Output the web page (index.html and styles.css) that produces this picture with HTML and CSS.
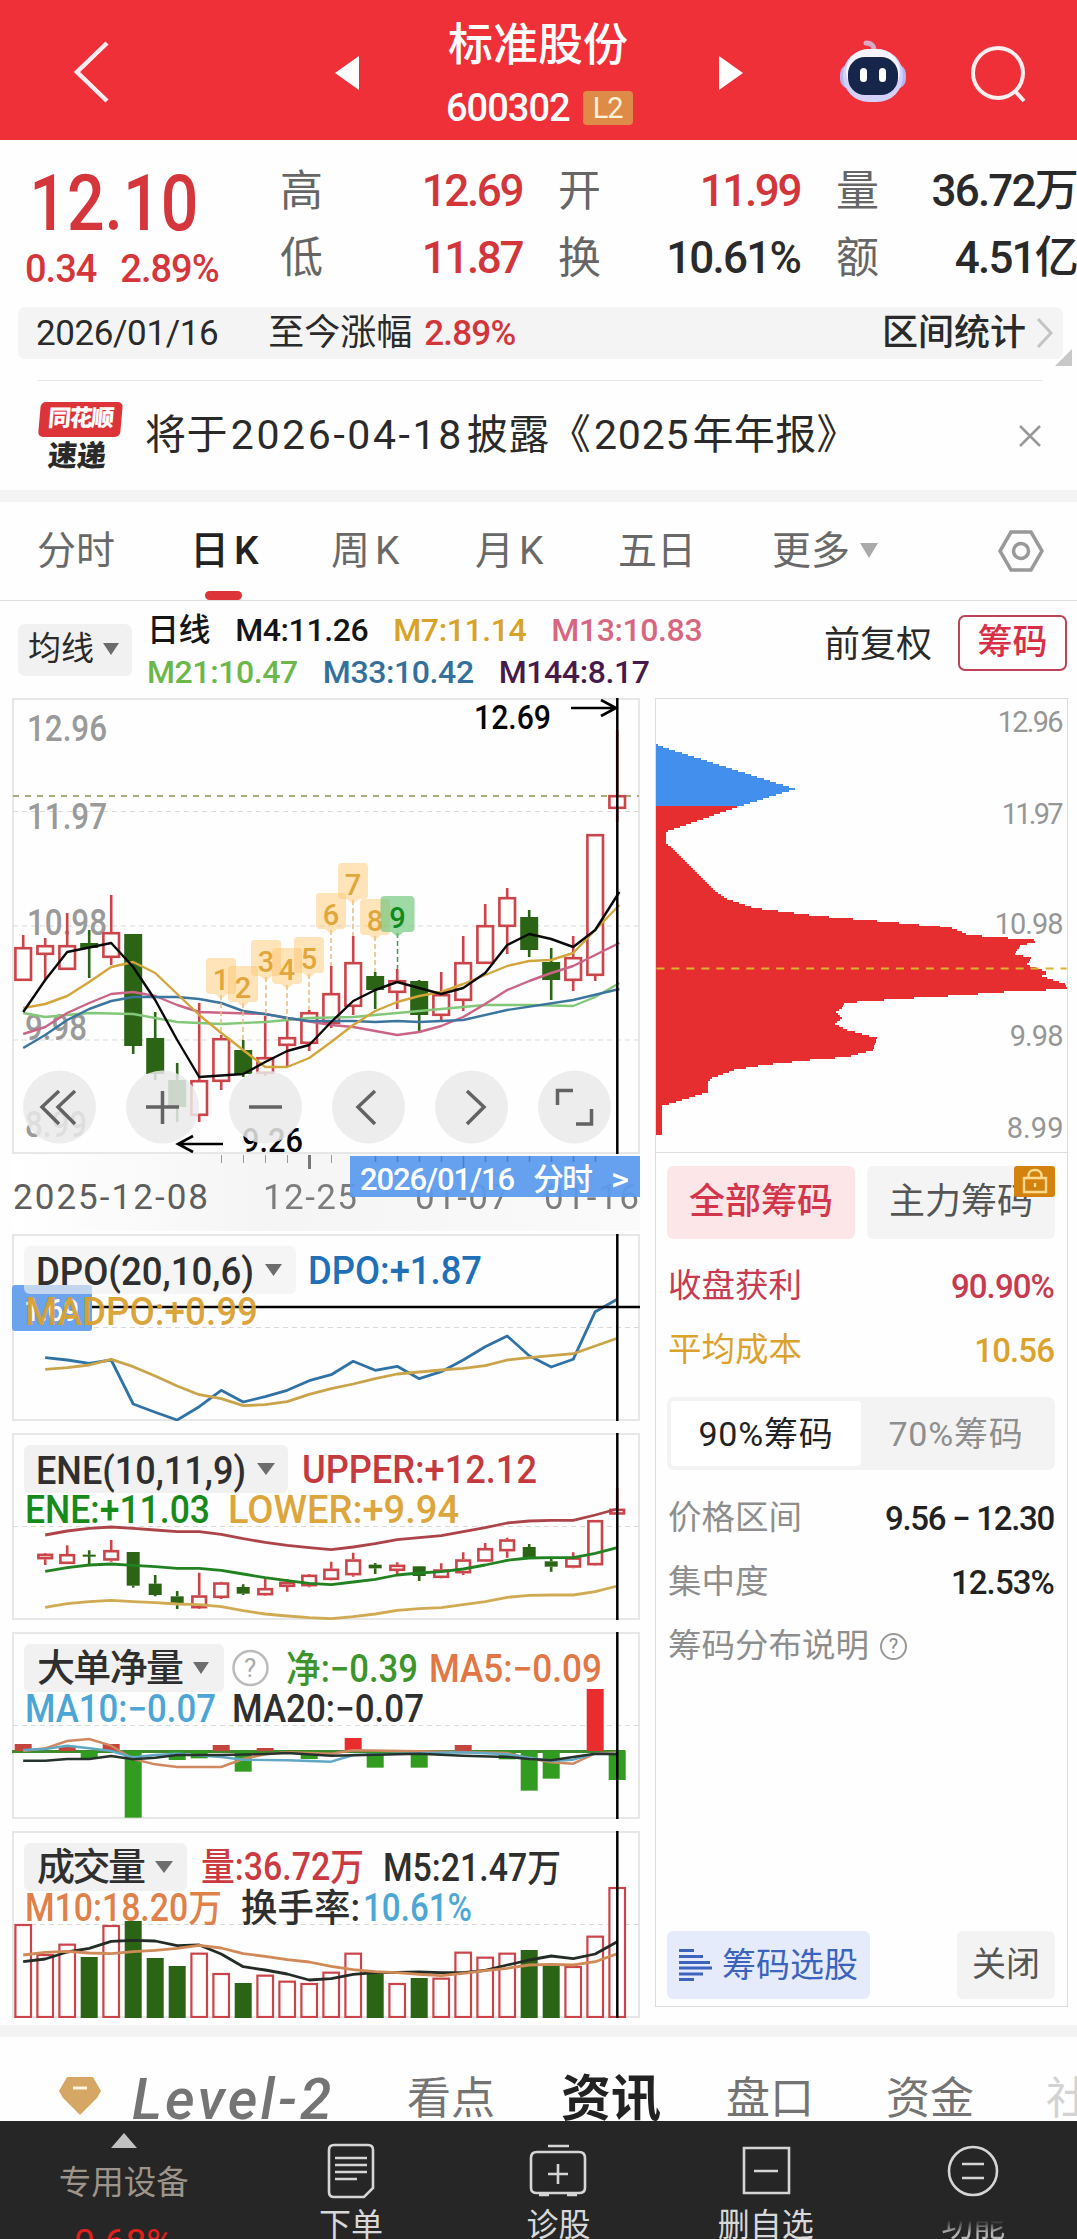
FILE: index.html
```html
<!DOCTYPE html>
<html lang="zh-CN">
<head>
    <meta charset="UTF-8">
    <meta name="viewport" content="width=device-width, initial-scale=1.0">
    <title>标准股份 600302</title>
    <link rel="stylesheet" href="styles.css">
</head>
<body>
    <header class="topbar">
        <svg class="back" width="40" height="64" viewBox="0 0 40 64"><path d="M35 3 L5 32 L35 61"/></svg>
        <svg class="prev" width="24" height="34" viewBox="0 0 24 34"><path d="M24 0 V34 L0 17 Z"/></svg>
        <div class="stock">
            <h1>标准股份</h1>
            <div class="code"><span>600302</span><b>L2</b></div>
        </div>
        <svg class="next" width="24" height="34" viewBox="0 0 24 34"><path d="M0 0 V34 L24 17 Z"/></svg>
        <svg class="robot" width="70" height="66" viewBox="0 0 70 66">
            <path d="M36 14 Q37 4 28 4" fill="none" stroke="#d9a9c6" stroke-width="5" stroke-linecap="round"/>
            <rect x="2" y="25" width="66" height="25" rx="10" fill="#b9b2f2"/>
            <rect x="5" y="10" width="60" height="53" rx="26" fill="#d3d1fa"/>
            <rect x="8" y="10" width="54" height="46" rx="23" fill="#f4f3ff"/>
            <rect x="10" y="18" width="50" height="38" rx="17" fill="#16264b"/>
            <rect x="22" y="29" width="7" height="14" rx="3.5" fill="#fff"/>
            <rect x="41" y="29" width="7" height="14" rx="3.5" fill="#fff"/>
        </svg>
        <svg class="search" width="60" height="60" viewBox="0 0 60 60"><circle cx="28" cy="28" r="25"/><path d="M45 46 L54 56"/></svg>
    </header>

    <section class="quote">
        <div class="price">
            <strong>12.10</strong>
            <div class="change"><span>0.34</span><span>2.89%</span></div>
        </div>
        <dl class="facts">
            <dt>高</dt><dd class="red">12.69</dd>
            <dt>开</dt><dd class="red">11.99</dd>
            <dt>量</dt><dd>36.72万</dd>
            <dt>低</dt><dd class="red">11.87</dd>
            <dt>换</dt><dd class="pct">10.61%</dd>
            <dt>额</dt><dd>4.51亿</dd>
        </dl>
    </section>

    <div class="range">
        <span class="num">2026/01/16</span>
        <span class="since">至今涨幅</span>
        <span class="num red">2.89%</span>
        <span class="stat">区间统计</span>
        <svg width="18" height="32" viewBox="0 0 18 32"><path d="M2 2 L15 16 L2 30"/></svg>
        <i class="corner"></i>
    </div>

    <div class="notice">
        <div class="express"><b>同花顺</b><span>速递</span></div>
        <p>将于<span class="date">2026-04-18</span>披露《<span>2025</span>年年报》</p>
        <svg width="24" height="24" viewBox="0 0 24 24"><path d="M2 2 L22 22 M22 2 L2 22"/></svg>
    </div>

    <nav class="periods">
        <a>分时</a>
        <a class="on">日<span>K</span></a>
        <a>周<span>K</span></a>
        <a>月<span>K</span></a>
        <a>五日</a>
        <a>更多<i class="caret"></i></a>
        <svg width="46" height="42" viewBox="0 0 46 42"><path d="M13 2 H33 L44 21 L33 40 H13 L2 21 Z"/><circle cx="23" cy="21" r="7.5"/></svg>
    </nav>

    <div class="ma">
        <span class="picker">均线<i class="caret"></i></span>
        <div class="values">
            <div><span class="black">日线</span><span class="black">M4:11.26</span><span class="gold">M7:11.14</span><span class="pink">M13:10.83</span></div>
            <div><span class="lime">M21:10.47</span><span class="blue">M33:10.42</span><span class="purple">M144:8.17</span></div>
        </div>
        <span class="adjust">前复权</span>
        <span class="chips-btn">筹码</span>
    </div>

    <main class="charts">
        <div class="left">
            <!-- view boxes share one coordinate space, so all panels line up on the x axis -->
            <svg id="kline" class="panel" width="628" height="533" viewBox="12 698 628 533">
                <defs>
                    <linearGradient id="axisBg" x1="0" x2="1" y1="0" y2="0">
                        <stop offset="0" stop-color="#fff"/><stop offset=".4" stop-color="#f5f5f5"/><stop offset="1" stop-color="#fafafa"/>
                    </linearGradient>
                </defs>
                <rect x="12" y="1154" width="628" height="77" fill="url(#axisBg)"/>
                <rect class="frame" x="13" y="699" width="626" height="454"/>
                <path class="grid" d="M13 811.5 H639 M13 926 H639 M13 1040 H639"/>
                <path d="M13 796 H639" stroke="#a9aa7c" stroke-width="2" stroke-dasharray="6 6"/>
                <g class="axis">
                    <text x="27" y="741" textLength="80" lengthAdjust="spacingAndGlyphs">12.96</text>
                    <text x="27" y="829" textLength="80" lengthAdjust="spacingAndGlyphs">11.97</text>
                    <text x="27" y="935" textLength="80" lengthAdjust="spacingAndGlyphs">10.98</text>
                    <text x="25" y="1040" textLength="62" lengthAdjust="spacingAndGlyphs">9.98</text>
                    <text x="25" y="1137" textLength="62" lengthAdjust="spacingAndGlyphs">8.99</text>
                </g>
                <g id="klineData"></g>
                <g id="marks"></g>
                <path class="cross" d="M617.3 698 V1154"/>
                <path class="arrow" d="M571 708 H616 M601 700 L616 708 L601 716 M223 1144 H178 M193 1136 L178 1144 L193 1152"/>
                <text class="point" x="474" y="729" textLength="77" lengthAdjust="spacingAndGlyphs">12.69</text>
                <text class="point" x="242" y="1152" textLength="61" lengthAdjust="spacingAndGlyphs">9.26</text>
                <path d="M221.5 1155 v8 M243.5 1155 v8 M265.5 1155 v8 M287.5 1155 v8 M331.5 1155 v8" stroke="#999" stroke-width="1"/>
                <path d="M309.5 1155 v14" stroke="#777" stroke-width="3"/>
                <g class="dates">
                    <text x="13" y="1209" textLength="195">2025-12-08</text>
                    <text x="263" y="1209" textLength="94" opacity=".8">12-25</text>
                    <text x="415" y="1209" textLength="94" opacity=".8">01-07</text>
                    <text x="544" y="1209" textLength="95" opacity=".8">01-16</text>
                </g>
                <rect x="350" y="1156" width="290" height="41" fill="#5b9bee" fill-opacity=".94"/>
                <path d="M375.5 1156 v6 M397.5 1156 v6 M419.5 1156 v6 M441.5 1156 v6 M485.5 1156 v6 M507.5 1156 v6 M529.5 1156 v6 M551.5 1156 v6 M573.5 1156 v6 M595.5 1156 v6 M463.5 1156 v12" stroke="#4c7fc2" stroke-width="1.5"/>
                <g class="tag">
                    <text x="360" y="1190" textLength="155">2026/01/16</text>
                    <text x="533" y="1190" textLength="60">分时</text>
                    <text x="611" y="1190" textLength="18" lengthAdjust="spacingAndGlyphs">&gt;</text>
                </g>
                <g class="tools">
                    <circle cx="59.5" cy="1107" r="36.5"/><circle cx="162.5" cy="1107" r="36.5"/><circle cx="265.5" cy="1107" r="36.5"/>
                    <circle cx="368.5" cy="1107" r="36.5"/><circle cx="471.5" cy="1107" r="36.5"/><circle cx="574.5" cy="1107" r="36.5"/>
                    <path d="M59 1091 L42 1107 L59 1124 M75 1091 L58 1107 L75 1124"/>
                    <path d="M146 1107 H179 M162.5 1091 V1124"/>
                    <path d="M249 1107 H282"/>
                    <path d="M375 1091 L358 1107 L375 1124"/>
                    <path d="M467 1091 L484 1107 L467 1124"/>
                    <path d="M557.5 1105 V1090.5 H573 M576 1124 H591.5 V1109"/>
                </g>
            </svg>

            <svg id="dpo" class="panel" width="628" height="187" viewBox="12 1234 628 187">
                <rect class="frame" x="13" y="1235" width="626" height="185"/>
                <path class="grid" d="M13 1327.5 H639"/>
                <g id="dpoData"></g>
                <path class="cross" d="M92 1307 H640 M617.3 1234 V1421"/>
                <rect x="12" y="1285" width="80" height="46" rx="3" fill="#6ba3ec"/>
                <text class="level-tag" x="24" y="1321" textLength="55" lengthAdjust="spacingAndGlyphs" fill="#fff">1.69</text>
                <rect class="chip" x="24" y="1246" width="272" height="48" rx="6"/>
                <text x="36" y="1285" textLength="218" lengthAdjust="spacingAndGlyphs">DPO(20,10,6)</text>
                <path class="tri" d="M265 1264 H282 L273.5 1276 Z"/>
                <text x="308" y="1284" textLength="174" lengthAdjust="spacingAndGlyphs" fill="#2070b8">DPO:+1.87</text>
                <text x="25" y="1325" textLength="233" lengthAdjust="spacingAndGlyphs" fill="#d9a02e" fill-opacity=".95">MADPO:+0.99</text>
            </svg>

            <svg id="ene" class="panel" width="628" height="187" viewBox="12 1433 628 187">
                <rect class="frame" x="13" y="1434" width="626" height="185"/>
                <path class="grid" d="M13 1526.5 H639"/>
                <g id="eneData"></g>
                <path class="cross" d="M617.3 1433 V1620"/>
                <rect class="chip" x="24" y="1445" width="264" height="48" rx="6"/>
                <text x="36" y="1484" textLength="210" lengthAdjust="spacingAndGlyphs">ENE(10,11,9)</text>
                <path class="tri" d="M257 1463 H275 L266 1475 Z"/>
                <text x="302" y="1483" textLength="235" lengthAdjust="spacingAndGlyphs" fill="#c43a3e">UPPER:+12.12</text>
                <text x="25" y="1523" textLength="185" lengthAdjust="spacingAndGlyphs" fill="#168a1a">ENE:+11.03</text>
                <text x="228" y="1523" textLength="231" lengthAdjust="spacingAndGlyphs" fill="#dda63c">LOWER:+9.94</text>
            </svg>

            <svg id="flow" class="panel" width="628" height="187" viewBox="12 1632 628 187">
                <rect class="frame" x="13" y="1633" width="626" height="185"/>
                <path class="grid" d="M13 1725.5 H639"/>
                <g id="flowData"></g>
                <path class="cross" d="M617.3 1632 V1819"/>
                <rect class="chip" x="24" y="1644" width="200" height="48" rx="6"/>
                <text x="37" y="1681" textLength="147">大单净量</text>
                <path class="tri" d="M193 1662 H209 L201 1674 Z"/>
                <circle cx="250.5" cy="1668" r="17" fill="none" stroke="#bbb" stroke-width="2.5"/>
                <text class="ask" x="244" y="1677">?</text>
                <text x="286" y="1682" textLength="132" lengthAdjust="spacingAndGlyphs" fill="#3c942b">净:−0.39</text>
                <text x="429" y="1682" textLength="173" lengthAdjust="spacingAndGlyphs" fill="#e27746">MA5:−0.09</text>
                <text x="25" y="1722" textLength="191" lengthAdjust="spacingAndGlyphs" fill="#4ba6d6">MA10:−0.07</text>
                <text x="232" y="1722" textLength="192" lengthAdjust="spacingAndGlyphs">MA20:−0.07</text>
            </svg>

            <svg id="volume" class="panel" width="628" height="187" viewBox="12 1831 628 187">
                <rect class="frame" x="13" y="1832" width="626" height="185"/>
                <path class="grid" d="M13 1924.5 H639"/>
                <g id="volumeBars"></g>
                <rect class="chip" x="24" y="1843" width="163" height="48" rx="6"/>
                <text x="37" y="1880" textLength="109">成交量</text>
                <path class="tri" d="M155 1861 H173 L164 1873 Z"/>
                <text x="201" y="1880" textLength="163" lengthAdjust="spacingAndGlyphs" fill="#cb3a40">量:36.72万</text>
                <text x="383" y="1881" textLength="178" lengthAdjust="spacingAndGlyphs">M5:21.47万</text>
                <text x="25" y="1921" textLength="197" lengthAdjust="spacingAndGlyphs" fill="#e0814a">M10:18.20万</text>
                <text x="241" y="1921" textLength="119" lengthAdjust="spacingAndGlyphs">换手率:</text>
                <text x="363" y="1921" textLength="109" lengthAdjust="spacingAndGlyphs" fill="#4da7d6">10.61%</text>
                <g id="volumeLines"></g>
                <path class="cross" d="M617.3 1831 V2018"/>
            </svg>
        </div>

        <aside class="chips">
            <svg id="spread" width="411" height="454" viewBox="656 699 411 454">
                <g id="spreadBars" shape-rendering="crispEdges"></g>
                <path d="M656 969 H1067" stroke="#d8b52c" stroke-width="2" stroke-dasharray="8 7"/>
                <g class="scale">
                    <text x="998" y="732" textLength="66">12.96</text>
                    <text x="1002" y="824" textLength="62">11.97</text>
                    <text x="995" y="935" textLength="69">10.98</text>
                    <text x="1010" y="1047" textLength="54">9.98</text>
                    <text x="1007" y="1139" textLength="57">8.99</text>
                </g>
            </svg>
            <div class="chip-info">
                <div class="kinds">
                    <span class="on">全部筹码</span>
                    <span>主力筹码
                        <svg class="lock" width="41" height="31" viewBox="0 0 41 31"><rect width="41" height="31" rx="3"/><path d="M10 12 H32 V26 H10 Z M14.5 11 Q14 4 21 4 Q28 4 27.5 11 M21 17 V21"/></svg>
                    </span>
                </div>
                <div class="row crimson"><span>收盘获利</span><b>90.90%</b></div>
                <div class="row amber"><span>平均成本</span><b>10.56</b></div>
                <div class="seg"><span class="on">90%筹码</span><span>70%筹码</span></div>
                <div class="row"><span>价格区间</span><b class="wide">9.56 − 12.30</b></div>
                <div class="row"><span>集中度</span><b>12.53%</b></div>
                <div class="row"><span>筹码分布说明</span><i class="help">?</i></div>
                <div class="actions">
                    <span class="pick">
                        <svg width="33" height="34" viewBox="0 0 33 34"><path d="M0 2.5 H15 M0 8.5 H24 M0 14.5 H31 M0 20 H33 M0 26 H24 M0 31.5 H15"/></svg>筹码选股
                    </span>
                    <span class="close">关闭</span>
                </div>
            </div>
        </aside>
    </main>

    <nav class="sections">
        <svg class="gem" width="42" height="38" viewBox="0 0 42 38"><path d="M8 0 H34 L42 14 L38 21 L21 38 L4 21 L0 14 Z"/><path class="shine" d="M14 11 H28"/></svg>
        <a class="level">Level-2</a>
        <a>看点</a>
        <a class="on">资讯</a>
        <a>盘口</a>
        <a>资金</a>
        <a class="faded">社</a>
    </nav>

    <footer class="bottombar">
        <div class="index">
            <i></i>
            <span>专用设备</span>
            <b>0.68%</b>
        </div>
        <div class="item">
            <svg width="50" height="56" viewBox="0 0 50 56"><path d="M8 2 H42 Q47 2 47 7 V45 L38 54 H8 Q3 54 3 49 V7 Q3 2 8 2 Z M9 15 H41 M9 22 H41 M9 29 H41 M9 36 H31"/></svg>
            <span>下单</span>
        </div>
        <div class="item">
            <svg width="58" height="56" viewBox="0 0 58 56"><path d="M19 3 H40 M8 9 H50 Q56 9 56 15 V45 Q56 50 50 50 H8 Q2 50 2 45 V15 Q2 9 8 9 Z M29 21 V41 M19 31 H39 M10 52 H20 M38 52 H48"/></svg>
            <span>诊股</span>
        </div>
        <div class="item">
            <svg width="50" height="56" viewBox="0 0 50 56"><path d="M3 5 H48 V50 H3 Z M13 28 H37"/></svg>
            <span>删自选</span>
        </div>
        <div class="item">
            <svg width="54" height="56" viewBox="0 0 54 56"><circle cx="27" cy="28" r="24"/><path d="M16 21 H38 M16 35 H38"/></svg>
            <span class="smudge">功能</span>
        </div>
    </footer>

    <script src="script.js"></script>
</body>
</html>
```
FILE: styles.css
```css
* {
    box-sizing: border-box;
}
body {
    width: 1077px;
    height: 2239px;
    margin: 0;
    overflow: hidden;
    background-color: #fefefe;
    color: #2a2a2a;
    font-family: Roboto, "Noto Sans CJK SC", sans-serif;
    line-height: 1;
    white-space: nowrap;
}
h1, p, dl, dd {
    margin: 0;
}
i {
    font-style: normal;
}
.red { color: #d2363b; }
.black { color: #151515; }
.gold { color: #d8a327; }
.pink { color: #d96680; }
.lime { color: #6cb74a; }
.blue { color: #33709c; }
.purple { color: #481a4c; }
.caret {
    display: inline-block;
    border: 9px solid transparent;
    border-top: 15px solid #6b6b6b;
    border-bottom: 0;
}

/* header */
.topbar {
    display: flex;
    align-items: center;
    height: 140px;
    background-color: #ef3038;
}
.back {
    margin: 4px 0 0 72px;
}
.back path, .search * {
    fill: none;
    stroke: #ffeef0;
    stroke-width: 4.5;
}
.search * {
    stroke-width: 4;
}
.prev, .next {
    fill: #fff;
    margin-top: 6px;
}
.prev {
    margin-left: 223px;
}
.stock {
    width: 190px;
    margin: 4px 0 0 87px;
}
.next {
    margin-left: 83px;
}
.stock h1 {
    margin: 0 0 0 2px;
    color: #fff;
    font-size: 45px;
    font-weight: 500;
    line-height: 56px;
}
.code {
    display: flex;
    align-items: center;
    gap: 13px;
    margin-top: 15px;
    color: #fff;
    font-size: 38px;
    font-weight: 500;
    letter-spacing: -1px;
}
.code b {
    width: 50px;
    height: 34px;
    border-radius: 4px;
    background-color: #df8b48;
    color: #fff2da;
    font-size: 29px;
    font-weight: 400;
    line-height: 35px;
    text-align: center;
}
.robot {
    margin: 4px 0 0 95px;
}
.search {
    margin: 10px 0 0 62px;
}

/* quote */
.quote {
    display: flex;
    height: 167px;
}
.price {
    width: 290px;
    padding: 25px 0 0 25px;
    color: #d5363b;
}
.price strong {
    display: block;
    width: 200px;
    padding-left: 5px;
    font-size: 78px;
    font-weight: 500;
    transform: scaleX(0.85);
    transform-origin: left;
}
.change {
    display: flex;
    gap: 24px;
    margin-top: 7px;
    font-size: 38px;
    font-weight: 500;
    letter-spacing: -1px;
}
.facts {
    display: grid;
    grid-template-columns: 44px 234px 44px 234px 44px 197px;
    grid-auto-rows: 67px;
    padding-top: 18px;
    font-size: 44px;
    line-height: 67px;
}
.facts dt {
    margin-left: -8px;
    padding-left: 0;
    color: #666;
    font-size: 43px;
}
.facts dt {
    margin-left: 0;
}
.facts dd {
    padding-right: 36px;
    font-weight: 500;
    text-align: right;
    letter-spacing: -2.4px;
}
.facts dd:nth-of-type(3n) {
    margin-left: -10px;
    padding-right: 0;
    letter-spacing: -1.8px;
}
.facts .pct {
    letter-spacing: -1.8px;
}

.range {
    position: relative;
    display: flex;
    align-items: center;
    height: 52px;
    margin: 0 14px 0 18px;
    padding: 0 9px 0 18px;
    border-radius: 7px;
    background-color: #f4f4f4;
    font-size: 36px;
}
.range .since {
    margin: 0 12px 0 50px;
}
.range .num {
    font-size: 35px;
    letter-spacing: -0.4px;
}
.range .red {
    font-weight: 500;
    letter-spacing: -0.8px;
}
.range .stat {
    margin-left: auto;
    font-weight: 500;
}
.range svg {
    margin-left: 10px;
    fill: none;
    stroke: #c4c4c4;
    stroke-width: 3;
}
.corner {
    position: absolute;
    right: -9px;
    bottom: -7px;
    border-left: 17px solid transparent;
    border-bottom: 17px solid #c8c8c8;
}

/* notice */
.notice {
    display: flex;
    align-items: center;
    height: 110px;
    margin: 21px 35px 0 38px;
    border-top: 1px solid #e6e6e6;
}
.express {
    width: 82px;
    height: 68px;
    text-align: center;
    transform: skewX(-5deg);
}
.express b {
    display: block;
    height: 35px;
    border-radius: 5px;
    background-color: #dc3439;
    color: #fff;
    font-size: 23px;
    font-weight: 900;
    letter-spacing: -1.5px;
    line-height: 34px;
}
.express span {
    display: block;
    font-size: 29px;
    font-weight: 900;
    line-height: 38px;
}
.notice p {
    margin-left: 25px;
    font-size: 41px;
    letter-spacing: 0.4px;
}
.notice p span {
    margin: 0 3px;
    letter-spacing: 0.8px;
}
.notice p .date {
    letter-spacing: 2.6px;
}
.notice svg {
    margin-left: auto;
    stroke: #999;
    stroke-width: 2.5;
}

/* period tabs */
.periods {
    display: flex;
    align-items: center;
    height: 111px;
    padding-left: 37px;
    border-top: 12px solid #f4f4f4;
    border-bottom: 1px solid #dedede;
    color: #696969;
    font-size: 39px;
}
.periods a {
    position: relative;
    width: 144px;
}
.periods a:first-child { width: 153px; }
.periods a:nth-child(2) { width: 141px; }
.periods a:nth-child(4) { width: 143px; }
.periods a:nth-child(5) { width: 154px; }
.periods a span {
    margin-left: 5px;
}
.periods .on {
    color: #222;
    font-weight: 500;
}
.periods .on::after {
    content: "";
    position: absolute;
    left: 15px;
    bottom: -29px;
    width: 37px;
    height: 9px;
    border-radius: 5px;
    background-color: #dc3439;
}
.periods .caret {
    margin-left: 10px;
    border-top-color: #aaa;
    vertical-align: 6px;
}
.periods svg {
    margin-left: 82px;
    fill: none;
    stroke: #999;
    stroke-width: 3.5;
}

.ma {
    display: flex;
    align-items: center;
    height: 97px;
    padding: 0 10px 0 18px;
}
.picker {
    width: 114px;
    height: 52px;
    padding-left: 10px;
    border-radius: 7px;
    background-color: #f1f1f1;
    font-size: 33px;
    line-height: 50px;
}
.picker .caret {
    margin-left: 9px;
    border-width: 12px 8px 0;
    vertical-align: 5px;
}
.values {
    width: 692px;
    padding: 3px 0 0 15px;
    font-size: 32px;
    font-weight: 500;
    line-height: 42px;
    letter-spacing: -0.4px;
}
.values div {
    display: flex;
    gap: 25px;
}
.adjust {
    margin-top: -10px;
    font-size: 36px;
}
.chips-btn {
    width: 109px;
    height: 56px;
    margin: -14px 0 0 auto;
    border: 2px solid #bd4358;
    border-radius: 7px;
    color: #d92f46;
    font-size: 35px;
    font-weight: 500;
    line-height: 51px;
    text-align: center;
}

/* charts */
.charts {
    display: flex;
    gap: 15px;
    height: 1327px;
    padding-left: 12px;
}
.left {
    display: flex;
    flex-direction: column;
    gap: 12px;
    width: 628px;
}
.left svg {
    display: block;
}
#kline {
    margin-bottom: -9px;
}
.panel {
    fill: #2f2f2f;
    font-size: 38px;
    font-weight: 500;
}
.frame {
    fill: none;
    stroke: #e7e7e7;
    stroke-width: 2;
}
.grid {
    fill: none;
    stroke: #d9d9d9;
    stroke-dasharray: 5 4;
}
.axis {
    fill: #9a9a9a;
    font-size: 37px;
}
.dates {
    fill: #5e5e5e;
    font-size: 35px;
    font-weight: 400;
}
.tag {
    fill: #fff;
    font-size: 31px;
}
.point {
    fill: #050505;
    font-size: 33px;
}
.level-tag {
    font-size: 31px;
}
.ask {
    fill: #aaa;
    font-size: 26px;
    font-weight: 400;
}
.cross {
    fill: none;
    stroke: #000;
    stroke-width: 2.5;
}
.arrow {
    fill: none;
    stroke: #000;
    stroke-width: 2.6;
}
.tools circle {
    fill: #eaeaea;
    fill-opacity: 0.85;
}
.tools path {
    fill: none;
    stroke: #636363;
    stroke-width: 3.5;
}
.chip {
    fill: #efefef;
    fill-opacity: 0.9;
}
#dpo .chip {
    fill-opacity: 0.65;
}
.tri {
    fill: #6d6d6d;
}
.line {
    fill: none;
    stroke-width: 2.8;
    stroke-linejoin: round;
}
.thin {
    stroke-width: 2.4;
}

/* chip distribution */
.chips {
    width: 413px;
    height: 1309px;
    border: 1px solid #dcdcdc;
}
.chips > svg {
    display: block;
    border-bottom: 1px solid #dcdcdc;
}
.scale text {
    fill: #969696;
    font-size: 29px;
}
.chip-info {
    display: flex;
    flex-direction: column;
    height: 853px;
    padding: 13px 12px 7px 11px;
}
.kinds {
    display: flex;
    gap: 12px;
    height: 73px;
    margin-bottom: 15px;
}
.kinds > span {
    position: relative;
    flex: 1;
    border-radius: 6px;
    background-color: #f4f4f4;
    color: #555;
    font-size: 36px;
    line-height: 73px;
    text-align: center;
}
.kinds .on {
    background-color: #fde6e8;
    color: #d3354a;
    font-weight: 500;
}
.lock {
    position: absolute;
    top: 0;
    right: 0;
}
.lock rect {
    fill: #d3820f;
}
.lock path {
    fill: none;
    stroke: #ffd98c;
    stroke-width: 2.4;
}
.row {
    display: flex;
    align-items: center;
    height: 64px;
    padding: 0 1px;
    color: #8e8e8e;
    font-size: 33.5px;
}
.row b {
    margin-left: auto;
    color: #222;
    font-size: 33px;
    font-weight: 500;
    letter-spacing: -0.9px;
}
.row .wide {
    letter-spacing: -1.3px;
}
.crimson, .row.crimson b {
    color: #c83a50;
}
.amber, .row.amber b {
    color: #dba22d;
}
.seg {
    display: flex;
    height: 73px;
    margin: 15px 0 16px;
    padding: 4px;
    border-radius: 7px;
    background-color: #f3f3f3;
}
.seg span {
    flex: 1;
    color: #8e8e8e;
    font-size: 34px;
    letter-spacing: 0.8px;
    line-height: 66px;
    text-align: center;
}
.seg .on {
    border-radius: 4px;
    background-color: #fff;
    color: #222;
}
.help {
    width: 27px;
    height: 27px;
    margin-left: 11px;
    border: 2px solid #999;
    border-radius: 50%;
    font-size: 20px;
    line-height: 23px;
    text-align: center;
}
.actions {
    display: flex;
    justify-content: space-between;
    height: 68px;
    margin-top: auto;
}
.pick, .close {
    border-radius: 6px;
    font-size: 34px;
    line-height: 67px;
}
.pick {
    display: flex;
    align-items: center;
    width: 203px;
    padding-left: 12px;
    background-color: #e6ebfb;
    color: #3c63bd;
}
.pick svg {
    margin-right: 10px;
    stroke: #3c63bd;
    stroke-width: 3;
}
.close {
    width: 98px;
    background-color: #f3f3f3;
    color: #555;
    text-align: center;
}

/* section tabs */
.sections {
    display: flex;
    align-items: center;
    height: 96px;
    padding: 40px 0 0 59px;
    border-top: 12px solid #f3f3f3;
    overflow: hidden;
    color: #747474;
    font-size: 44px;
}
.sections a {
    flex: none;
    margin-right: 72px;
}
.gem {
    flex: none;
    margin: -7px 31px 0 0;
    fill: #d6a764;
}
.gem .shine {
    stroke: #fff4dd;
    stroke-width: 3;
}
.sections .level {
    width: 213px;
    margin-right: 62px;
    font-size: 57px;
    font-style: italic;
    font-weight: 500;
    letter-spacing: 3.2px;
}
.sections a:nth-of-type(2) {
    margin-right: 66px;
}
.sections .on {
    margin-right: 65px;
    color: #222;
    font-size: 50px;
    font-weight: 700;
}
.sections .faded {
    margin: 0;
    color: #d3d3d3;
}

/* bottom bar */
.bottombar {
    display: flex;
    height: 118px;
    background-color: #262626;
    color: #d8d8d8;
}
.index {
    width: 248px;
    color: #9d948b;
    font-size: 32.5px;
    text-align: center;
}
.index i {
    display: block;
    width: 0;
    margin: 12px auto 19px;
    border: 13px solid transparent;
    border-top: 0;
    border-bottom: 15px solid #c2c2c2;
}
.index span, .index b {
    display: block;
}
.index b {
    margin-top: 24px;
    color: #e0201d;
    font-size: 37px;
    font-weight: 400;
}
.item {
    display: flex;
    flex-direction: column;
    align-items: center;
    width: 208px;
    padding-top: 22px;
    font-size: 32px;
}
.item svg {
    flex: none;
    fill: none;
    stroke: #d5d5d5;
    stroke-width: 2.6;
}
.item span {
    margin-top: 10px;
}
.item .smudge {
    background: linear-gradient(#262626 35%, #b5b5b5 75%);
    background-clip: text;
    -webkit-background-clip: text;
    color: transparent;
}
```
FILE: script.js
```js
const RED = '#cb444a';
const GREEN = '#2b6414';
const NS = 'http://www.w3.org/2000/svg';

// candle centre for the given trading day
const cx = i => 23.2 + i * 22;

function add(id, tag, attrs, text) {
    const el = document.createElementNS(NS, tag);
    for (const key in attrs) el.setAttribute(key, attrs[key]);
    if (text) el.textContent = text;
    document.getElementById(id).appendChild(el);
}

// points are [day, y] pairs
function line(id, points, color, cls) {
    const d = points.map(p => cx(p[0]).toFixed(1) + ',' + p[1].toFixed(1)).join(' ');
    add(id, 'polyline', { points: d, stroke: color, class: 'line ' + (cls || '') });
}

function series(values, first, top) {
    return values.map((v, i) => [i + first, top + v / 3]);
}

function candle(id, i, up, high, top, bottom, low, w) {
    const color = up ? RED : GREEN;
    const x = cx(i);
    add(id, 'path', { d: `M${x} ${high} V${top} M${x} ${bottom} V${low}`, stroke: color, 'stroke-width': 2.6 });
    if (up) {
        add(id, 'rect', { x: x - w / 2 + 1.2, y: top + 1.2, width: w - 2.4, height: Math.max(bottom - top - 2.4, 1), fill: '#fff', stroke: color, 'stroke-width': 2.6 });
    } else {
        add(id, 'rect', { x: x - w / 2, y: top, width: w, height: Math.max(bottom - top, 2), fill: color });
    }
}

// daily candles: up, high, body top, body bottom, low
const days = [
    [1, 935, 947, 981, 981], [1, 938, 945, 955, 980], [1, 913, 945, 970, 970], [0, 930, 943, 948, 978],
    [1, 895, 932, 958, 965], [0, 934, 934, 1046, 1054], [0, 1012, 1038, 1074, 1080], [0, 1063, 1080, 1107, 1122],
    [1, 1003, 1080, 1116, 1122], [1, 1035, 1038, 1082, 1090], [0, 1040, 1050, 1074, 1077], [1, 1016, 1057, 1074, 1076],
    [1, 1020, 1037, 1046, 1066], [1, 1010, 1012, 1044, 1051], [1, 966, 993, 1024, 1028], [1, 936, 962, 1007, 1015],
    [0, 972, 976, 990, 1009], [1, 969, 980, 993, 1009], [0, 980, 981, 1015, 1031], [1, 972, 994, 1016, 1021],
    [1, 936, 962, 1001, 1011], [1, 904, 925, 964, 964], [1, 888, 897, 927, 954], [0, 910, 917, 950, 957],
    [0, 948, 962, 980, 1000], [1, 936, 957, 981, 991], [1, 834, 834, 976, 981], [1, 730, 795, 809, 822]
];
days.forEach((d, i) => candle('klineData', i, d[0], d[1], d[2], d[3], d[4], 18));

const averages = {
    '#82c878': [[0, 1013], [1, 1017], [3, 1013], [5, 1014], [7, 1022], [9, 1024], [11, 1022], [13, 1018], [15, 1017], [17, 1013], [19, 1009], [21, 1005], [23, 1005], [25, 1006], [26, 997], [27.1, 983]],
    '#cb6486': [[0, 1034], [1, 1027], [2, 1013], [3, 1003], [4, 994], [5, 992], [6, 996], [7, 1005], [8, 1012], [11, 1014], [12, 1018], [14, 1025], [15, 1027], [16, 1031], [17, 1035], [18, 1032], [19, 1026], [20, 1017], [21, 1004], [22, 990], [23, 981], [24, 973], [25, 966], [26, 955], [27.1, 943]],
    '#3c759e': [[0, 1048], [1, 1035], [2, 1020], [3, 1009], [4, 1001], [5, 997], [7, 997], [8, 999], [9, 1003], [10, 1011], [11, 1014], [12, 1018], [13, 1021], [15, 1021], [16, 1022], [17, 1021], [18, 1022], [20, 1020], [22, 1010], [25, 1000], [27.1, 989]],
    '#d3a63c': [[0, 1008], [1, 1004], [2, 996], [3, 982], [4, 967], [5, 962], [6, 973], [7, 994], [8, 1015], [9, 1033], [10, 1050], [11, 1067], [12, 1067], [13, 1058], [14, 1042], [15, 1025], [16, 1011], [17, 1002], [18, 996], [19, 992], [20, 984], [21, 975], [22, 966], [23, 961], [24, 960], [25, 953], [26, 930], [27.1, 905]],
    '#0a0a0a': [[0, 1012], [1, 980], [2, 952], [4, 943], [5, 967], [6, 1000], [7, 1040], [8, 1077], [10, 1074], [11, 1062], [12, 1051], [13, 1045], [14, 1022], [15, 1001], [16, 990], [17, 982], [18, 988], [19, 994], [20, 988], [21, 973], [22, 945], [23, 934], [24, 939], [25, 947], [26, 930], [27.1, 892]]
};
for (const color in averages) {
    line('klineData', averages[color], color, 'thin');
}

// nine-count marks: x, badge top, stem end
const marks = [[221, 958, 1035], [243, 966, 1040], [266, 940, 1016], [287, 948, 1020], [309, 937, 1010],
    [331, 893, 966], [353, 863, 936], [375, 899, 972], [397.5, 896, 969]];
marks.forEach((m, i) => {
    const last = i === 8;
    const w = last ? 34 : 30;
    add('marks', 'path', { d: `M${m[0]} ${m[1] + 37} V${m[2]}`, stroke: last ? '#4c9653' : '#e3bd7c', 'stroke-width': 1.5, 'stroke-dasharray': '5 3' });
    add('marks', 'path', {
        d: `M${m[0] - w / 2 + 4} ${m[1]} h${w - 8} q4 0 4 4 v28 q0 4 -4 4 h-${w / 2 - 10} l-6 5 l-6 -5 h-${w / 2 - 10} q-4 0 -4 -4 v-28 q0 -4 4 -4 z`,
        fill: last ? '#6cc576' : '#ffc873', 'fill-opacity': last ? 0.65 : 0.5
    });
    add('marks', 'text', { x: m[0], y: m[1] + 32, 'text-anchor': 'middle', style: `font-size:29px;fill:${last ? '#0f8a1c' : '#e2a73a'}` }, String(i + 1));
});

// DPO
line('dpoData', series([413, 420, 430, 420, 552, 577, 600, 560, 511, 546, 530, 511, 482, 464, 424, 451, 439, 476, 455, 420, 380, 348, 407, 441, 418, 275, 238], 1, 1220), '#2f73a6');
line('dpoData', series([448, 443, 435, 418, 440, 468, 498, 524, 536, 557, 554, 545, 523, 506, 492, 476, 462, 456, 450, 445, 437, 420, 413, 407, 401, 378, 355], 1, 1220), '#c9a44a');

// ENE
const eneDays = [
    [1, 384, 386, 403, 420], [1, 361, 387, 417, 417], [0, 376, 389, 394, 417], [1, 345, 375, 407, 410], [0, 381, 381, 482, 488],
    [0, 450, 476, 510, 514], [0, 498, 514, 535, 552], [1, 443, 511, 550, 552], [1, 470, 472, 519, 522], [0, 478, 486, 506, 510],
    [1, 460, 489, 511, 512], [1, 462, 470, 486, 500], [1, 447, 449, 484, 487], [1, 410, 431, 465, 466], [1, 383, 403, 451, 455],
    [0, 414, 419, 430, 447], [1, 412, 419, 438, 450], [0, 423, 424, 453, 468], [1, 415, 433, 459, 460], [1, 382, 403, 445, 450],
    [1, 354, 369, 410, 410], [1, 338, 343, 379, 398], [0, 357, 366, 398, 398], [0, 398, 409, 425, 440], [1, 382, 397, 428, 430],
    [1, 285, 285, 421, 422], [1, 190, 251, 269, 269]
];
eneDays.forEach((d, i) => {
    const y = d.slice(1).map(v => 1425 + v / 3);
    candle('eneData', i + 1, d[0], y[0], y[1], y[2], y[3], d[0] ? 16 : 13);
});
line('eneData', series([330, 318, 310, 306, 310, 315, 320, 320, 328, 341, 352, 361, 368, 374, 366, 356, 344, 338, 332, 320, 308, 294, 288, 286, 286, 270, 252], 1, 1425), '#ad4449');
line('eneData', series([439, 428, 420, 417, 421, 425, 430, 430, 436, 447, 458, 467, 475, 479, 471, 463, 450, 444, 440, 432, 420, 406, 399, 398, 398, 385, 368], 1, 1425), '#228222');
line('eneData', series([547, 536, 530, 526, 530, 533, 537, 539, 545, 557, 567, 573, 578, 581, 575, 567, 556, 551, 548, 539, 530, 517, 511, 510, 510, 500, 483], 1, 1425), '#d1ab54');

// big order net flow, bars run from the zero line
const flow = [[0, 357], [2, 365], [3, 402], [4, 357], [5, 578], [7, 405], [8, 400], [9, 360], [10, 440], [11, 369], [13, 402],
    [15, 339], [16, 428], [18, 428], [20, 360], [22, 403], [23, 497], [24, 461], [26, 192], [27, 465]];
add('flowData', 'rect', { x: 12, y: 1750, width: cx(27) - 4, height: 3, fill: '#3f8a2b' });
flow.forEach(([i, v]) => {
    const y = 1625 + v / 3;
    const big = v < 345;
    add('flowData', 'rect', { x: cx(i) - 8.5, y: Math.min(y, 1751), width: 17, height: Math.abs(y - 1751), fill: v < 378 ? (big ? '#e92d2f' : '#c3453b') : '#329c20' });
});
const flowLine = points => points.map(p => [p[0], 1625 + p[1] / 3]);
line('flowData', flowLine([[0, 378], [1, 370], [2, 348], [3, 342], [4, 362], [5, 402], [6, 418], [7, 426], [9, 426], [10, 402], [11, 388], [12, 382], [14, 386], [15, 376], [18, 379], [22, 384], [23, 400], [24, 412], [25, 416], [26, 385], [27, 383]]), '#cf8860', 'thin');
line('flowData', flowLine([[0, 375], [1, 372], [2, 362], [3, 370], [4, 378], [5, 397], [6, 390], [7, 386], [9, 396], [10, 404], [12, 406], [14, 410], [15, 390], [17, 386], [20, 382], [22, 388], [23, 398], [24, 408], [25, 404], [26, 386], [27, 386]]), '#62a7c4', 'thin');
line('flowData', flowLine([[0, 407], [1, 407], [2, 402], [3, 402], [4, 393], [5, 403], [6, 398], [7, 390], [9, 390], [11, 387], [12, 384], [14, 392], [15, 391], [18, 386], [20, 392], [22, 396], [23, 402], [24, 406], [26, 386], [27, 388]]), '#26332c', 'thin');

// volume
const volume = [300, 390, 359, -396, 303, -288, -399, -423, 386, 447, -474, 452, 470, 477, 443, 386, -447, 477, -459, 461, 383, 398, 386, -375, -420, 426, 335, 189];
volume.forEach((v, i) => {
    const y = 1825 + Math.abs(v) / 3;
    if (v > 0) {
        add('volumeBars', 'rect', { x: cx(i) - 7.8, y: y, width: 15.6, height: 2017 - y, fill: '#fff', stroke: RED, 'stroke-width': 2.2 });
    } else {
        add('volumeBars', 'rect', { x: cx(i) - 8.5, y: y, width: 17, height: 2018 - y, fill: GREEN });
    }
});
line('volumeLines', series([410, 402, 381, 370, 349, 346, 348, 362, 360, 387, 425, 435, 447, 465, 461, 448, 443, 442, 441, 443, 443, 436, 420, 405, 393, 401, 387, 350], 0, 1825), '#242c26');
line('volumeLines', series([390, 382, 379, 384, 386, 380, 376, 370, 361, 369, 386, 394, 404, 411, 424, 434, 440, 443, 448, 452, 445, 437, 430, 420, 418, 420, 410, 386], 0, 1825), '#cf8a57');

// chip distribution: [length, y], drawn as thin horizontal bars
const outline = [[0, 744], [139, 788], [81, 806], [9, 831], [10, 842], [59, 890], [71, 898], [98, 907], [161, 915], [233, 921],
    [294, 927], [313, 935], [378, 940], [379, 942], [364, 946], [359, 955], [376, 957], [371, 965], [384, 969], [393, 973],
    [386, 976], [409, 984], [412, 989], [348, 992], [309, 995], [241, 999], [188, 1003], [186, 1008], [180, 1012], [186, 1018],
    [179, 1024], [191, 1030], [221, 1038], [217, 1050], [191, 1057], [154, 1060], [108, 1065], [78, 1070], [56, 1078],
    [52, 1082], [52, 1092], [6, 1106], [6, 1135]];
for (let y = 744, k = 0; y < 1135; y += 2) {
    while (outline[k + 1][1] < y) k++;
    const [w0, y0] = outline[k];
    const [w1, y1] = outline[k + 1];
    const w = w0 + (w1 - w0) * (y - y0) / (y1 - y0);
    add('spreadBars', 'rect', { x: 656, y: y, width: Math.max(w, 2), height: 2, fill: y < 806 ? '#428fee' : '#e62e30' });
}
```
